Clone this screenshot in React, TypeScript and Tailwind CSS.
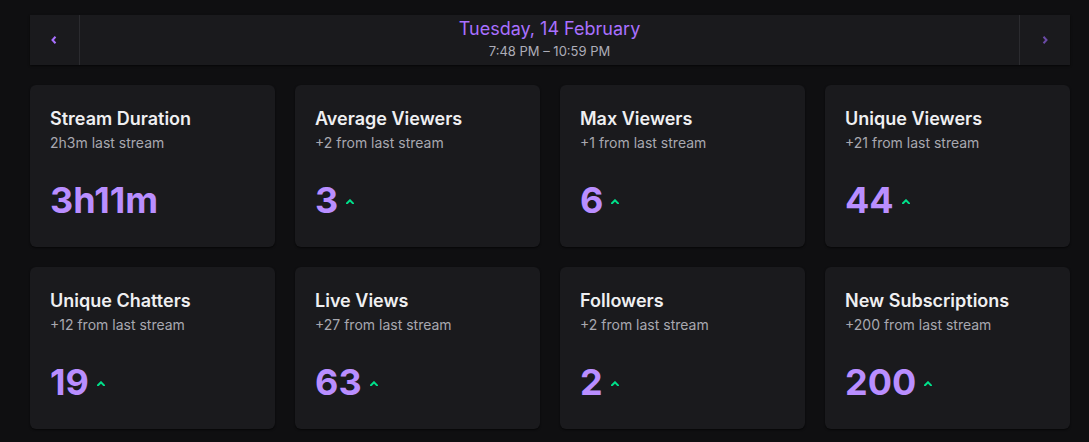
import React from "react";

type Stat = { title: string; sub: string; value: string; up: boolean };

const stats: Stat[] = [
  { title: "Stream Duration", sub: "2h3m last stream", value: "3h11m", up: false },
  { title: "Average Viewers", sub: "+2 from last stream", value: "3", up: true },
  { title: "Max Viewers", sub: "+1 from last stream", value: "6", up: true },
  { title: "Unique Viewers", sub: "+21 from last stream", value: "44", up: true },
  { title: "Unique Chatters", sub: "+12 from last stream", value: "19", up: true },
  { title: "Live Views", sub: "+27 from last stream", value: "63", up: true },
  { title: "Followers", sub: "+2 from last stream", value: "2", up: true },
  { title: "New Subscriptions", sub: "+200 from last stream", value: "200", up: true },
];

function Caret() {
  return (
    <svg width="8" height="5" viewBox="0 0 8 5" className="ml-2 mt-[2px]">
      <polyline points="1,4.3 4,1.3 7,4.3" fill="none" stroke="#00e08a" strokeWidth="2" strokeLinecap="square" />
    </svg>
  );
}

function StatCard({ s }: { s: Stat }) {
  return (
    <div className="bg-[#1a1a1d] rounded-md shadow-[0_1px_2px_rgba(0,0,0,0.6)] pl-5 pr-5 pt-5 pb-[27px]">
      <div className="text-[18px] leading-7 font-semibold text-[#efeff1]">{s.title}</div>
      <div className="text-sm leading-5 text-[#a8a8b0]">{s.sub}</div>
      <div className="mt-[27px] flex items-center h-10">
        <span className="text-4xl leading-10 font-bold text-[#b98eff]">{s.value}</span>
        {s.up && <Caret />}
      </div>
    </div>
  );
}

export default function App() {
  return (
    <div
      className="min-h-screen bg-[#0f0f11] pt-[15px] pl-[30px] pb-[13px]"
      style={{ fontFamily: "Inter, 'Noto Sans', sans-serif" }}
    >
      <div className="w-[1040px]">
        <div className="flex h-[50px] bg-[#1a1a1d] shadow-[0_1px_2px_rgba(0,0,0,0.6)]">
          <button className="w-[50px] flex items-center justify-center border-r border-[#2b2b2f]">
            <svg width="6" height="8" viewBox="0 0 6 8" className="-ml-[1px]">
              <polyline points="4.5,0.8 1.5,4 4.5,7.2" fill="none" stroke="#a970ff" strokeWidth="2" />
            </svg>
          </button>
          <div className="flex-1 flex flex-col items-center pt-[2px]">
            <div className="text-[18px] leading-6 text-[#a970ff]">Tuesday, 14 February</div>
            <div className="text-[13px] leading-5 text-[#adadb8]">7:48 PM – 10:59 PM</div>
          </div>
          <button className="w-[51px] flex items-center justify-center border-l border-[#2b2b2f]">
            <svg width="6" height="8" viewBox="0 0 6 8" className="-ml-[1px]">
              <polyline points="1.5,0.8 4.5,4 1.5,7.2" fill="none" stroke="#6a4aa6" strokeWidth="2" />
            </svg>
          </button>
        </div>
        <div className="grid grid-cols-4 gap-5 mt-5">
          {stats.map((s) => (
            <StatCard key={s.title} s={s} />
          ))}
        </div>
      </div>
    </div>
  );
}
